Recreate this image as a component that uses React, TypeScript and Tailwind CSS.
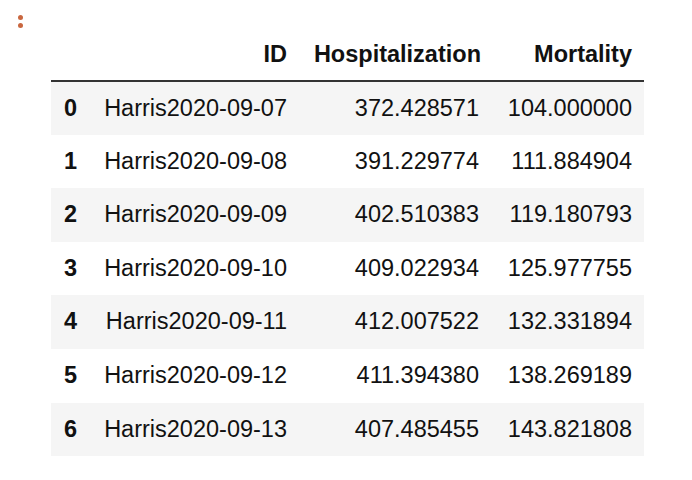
import React from "react";

const rows: [string, string, string, string][] = [
  ["0", "Harris2020-09-07", "372.428571", "104.000000"],
  ["1", "Harris2020-09-08", "391.229774", "111.884904"],
  ["2", "Harris2020-09-09", "402.510383", "119.180793"],
  ["3", "Harris2020-09-10", "409.022934", "125.977755"],
  ["4", "Harris2020-09-11", "412.007522", "132.331894"],
  ["5", "Harris2020-09-12", "411.394380", "138.269189"],
  ["6", "Harris2020-09-13", "407.485455", "143.821808"],
];

export default function App() {
  return (
    <div
      className="w-[692px] h-[480px] bg-white relative text-[#111]"
      style={{ fontFamily: '"Liberation Sans", Arial, sans-serif' }}
    >
      <div className="absolute left-[18px] top-[15px] flex flex-col gap-[3px]">
        <div className="w-[5px] h-[5px] rounded-full bg-[#c9673f]" />
        <div className="w-[5px] h-[5px] rounded-full bg-[#c9673f]" />
      </div>
      <div className="pt-[30px] pl-[51px]">
        <table className="border-collapse table-fixed w-[593px] text-[23.5px] leading-none">
          <colgroup>
            <col className="w-[37px]" />
            <col className="w-[211px]" />
            <col className="w-[194px]" />
            <col className="w-[151px]" />
          </colgroup>
          <thead>
            <tr className="h-[51px] border-b-2 border-[#333]">
              <th className="p-0" />
              <th className="p-0 pr-[12px] text-right font-bold">ID</th>
              <th className="p-0 pr-[12px] text-right font-bold">Hospitalization</th>
              <th className="p-0 pr-[12px] text-right font-bold">Mortality</th>
            </tr>
          </thead>
          <tbody>
            {rows.map((r, i) => (
              <tr
                key={r[0]}
                className={`h-[53.6px] ${i % 2 === 0 ? "bg-[#f5f5f5]" : "bg-white"}`}
              >
                <th className="p-0 pl-[13px] text-left font-bold">{r[0]}</th>
                <td className="p-0 pr-[12px] text-right">{r[1]}</td>
                <td className="p-0 pr-[14px] text-right">{r[2]}</td>
                <td className="p-0 pr-[12px] text-right">{r[3]}</td>
              </tr>
            ))}
          </tbody>
        </table>
      </div>
    </div>
  );
}
